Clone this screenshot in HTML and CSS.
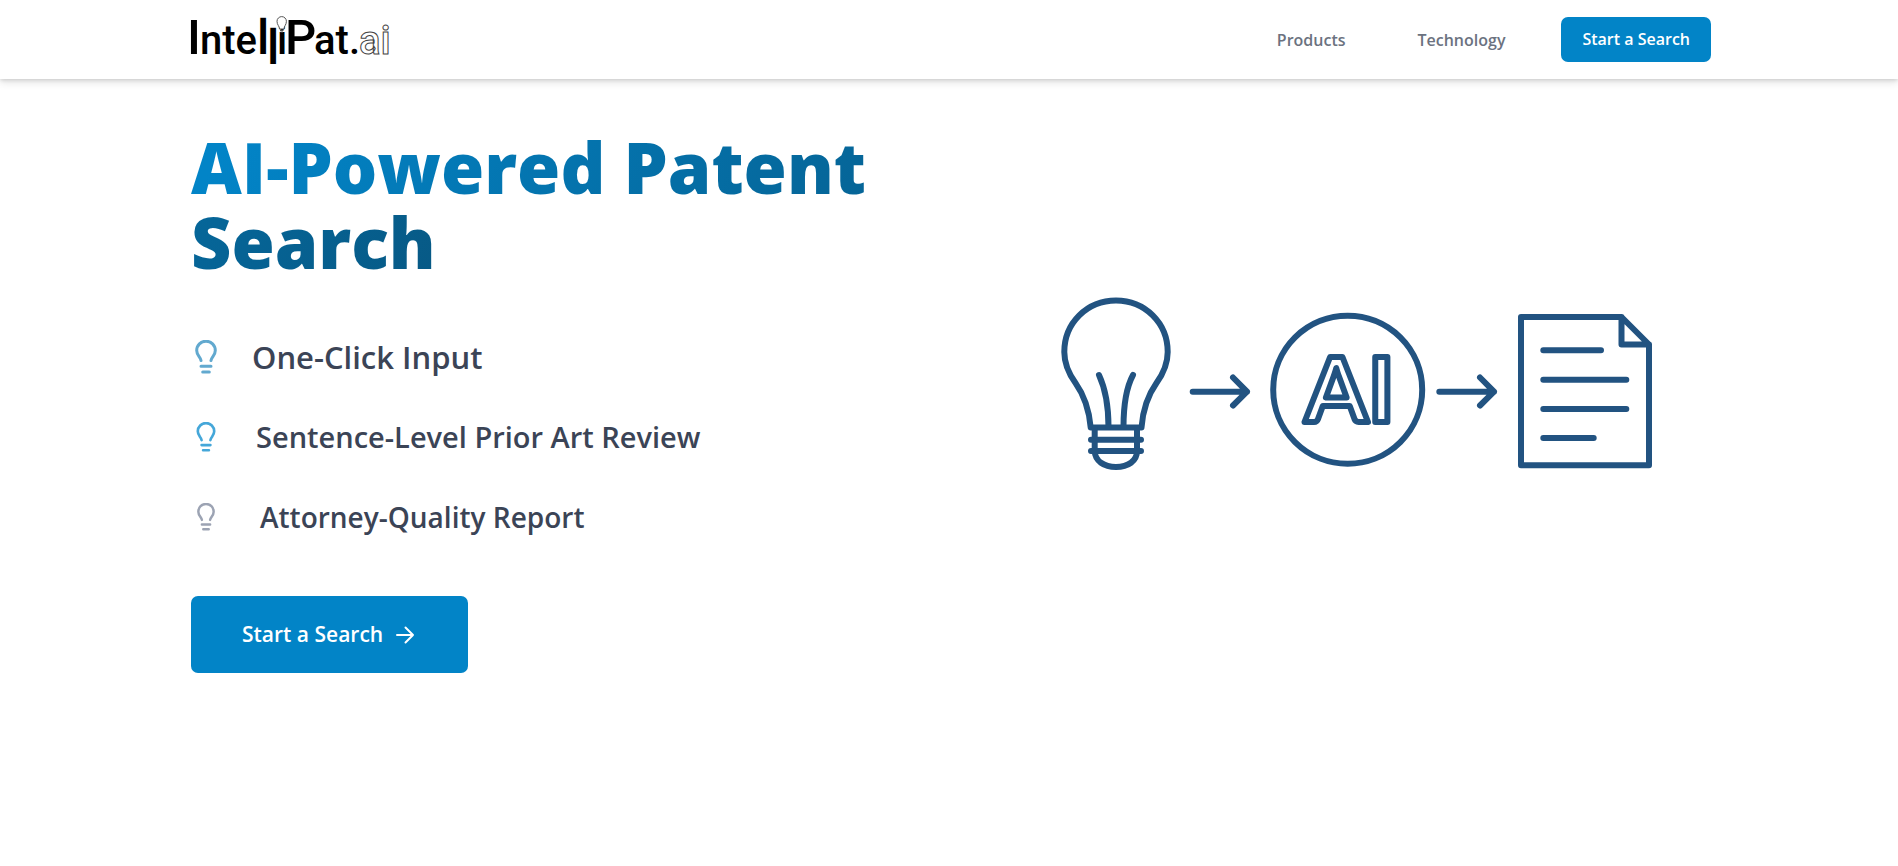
FILE: index.html
```html
<!DOCTYPE html>
<html lang="en">
<head>
<meta charset="utf-8">
<meta name="viewport" content="width=device-width, initial-scale=1">
<title>IntelliPat.ai</title>
<link rel="stylesheet" href="styles.css">
</head>
<body>
<svg class="defs" width="0" height="0" aria-hidden="true">
  <symbol id="bulb" viewBox="0 0 22 34">
    <path d="M6 20.500C5.500 17 1.700 15.500 1.700 10.500A9.300 9.300 0 0 1 20.300 10.500C20.300 15.500 16.500 17 16 20.500M6 26.200H16M7.700 32H14.300"/>
  </symbol>
</svg>
<header class="site-header">
  <div class="container bar">
    <a class="logo" href="#" aria-label="IntelliPat.ai home">
      <svg width="200" height="54" viewBox="0 0 200 54">
        <g class="logo-solid">
          <text class="cap" x="-4" y="41">I</text>
          <text x="9" y="41">nte</text>
          <text class="tall" x="66" y="41">l</text>
          <text class="tall" x="76" y="51">l</text>
          <text x="86" y="41">i</text>
          <text class="cap" x="94" y="41">P</text>
          <text x="123" y="41">at.</text>
        </g>
        <text class="logo-outline" x="168" y="41">ai</text>
        <g class="logo-bulb">
          <path d="M88.500 16C88.500 13 86 12 86 8.300A4.700 4.700 0 0 1 95.400 8.300C95.400 12 93 13 93 16Z"/>
          <path d="M89 17.500H92.500M89.500 19H92"/>
        </g>
      </svg>
    </a>
    <nav class="nav">
      <a class="nav-link" href="#">Products</a>
      <a class="nav-link" href="#">Technology</a>
      <button class="btn btn-small" type="button">Start a Search</button>
    </nav>
  </div>
</header>
<main class="container hero">
  <div class="copy">
    <h1 class="title"><span class="title-ink">AI-Powered Patent Search</span></h1>
    <ul class="features">
      <li class="feature first"><svg class="icon"><use href="#bulb"/></svg><span>One-Click Input</span></li>
      <li class="feature second"><svg class="icon"><use href="#bulb"/></svg><span>Sentence-Level Prior Art Review</span></li>
      <li class="feature third"><svg class="icon"><use href="#bulb"/></svg><span>Attorney-Quality Report</span></li>
    </ul>
    <button class="btn btn-large" type="button">Start a Search
      <svg class="arrow" viewBox="0 0 20 20" width="20" height="20"><path d="M2 10H18M10.500 2.500L18 10L10.500 17.500"/></svg>
    </button>
  </div>
  <svg class="diagram" viewBox="0 0 740 224" role="img" aria-label="Idea to AI to report">
    <path d="M145 10.500C116 10.500 93.300 33 93.300 62C93.300 75 98 84 104.500 93C113 105 118 118 119.700 137.500H170.500C172 118 177 105 185.500 93C192 84 196.700 75 196.700 62C196.700 33 174 10.500 145 10.500Z"/>
    <path d="M128 85C134 98 137.500 115 137.500 137M162 85C155 98 152.500 115 152.500 137M120 149.700H170M120 161H170M123.700 138V161C124 171 133 177 145 177S166 171 166 161V138"/>
    <path d="M221.700 101.700H276M262 87.500L276 101.700L262 115.500"/>
    <ellipse cx="376.700" cy="99.700" rx="74.500" ry="74"/>
    <text class="ai" x="334" y="132">A</text>
    <text class="ai" x="397" y="132">I</text>
    <path d="M468.300 101.700H523M509 87.500L523 101.700L509 115.500"/>
    <path d="M550 27H650.500L678 54.500V175.300H550ZM650.500 27V54.500H678M572.300 60.300H630M572.300 89.700H655.300M572.300 119H655.300M572.300 148H622.700"/>
  </svg>
</main>
</body>
</html>
```
FILE: styles.css
```css
* { box-sizing: border-box; }
body {
  margin: 0;
  background: #fff;
  color: #3b4456;
  font-family: "Open Sans", "Noto Sans", sans-serif;
}
.defs { position: absolute; }
.container {
  width: 100%;
  max-width: 1600px;
  margin: 0 auto;
  padding: 0 38px 0 42px;
}
.site-header {
  background: #fff;
  box-shadow: 0 4px 8px rgba(0, 0, 0, 0.1), 0 1px 4px rgba(0, 0, 0, 0.14);
}
.bar {
  display: flex;
  align-items: center;
  justify-content: space-between;
  height: 79px;
}
.logo svg { display: block; overflow: visible; }
.logo-solid, .logo-outline { font-family: Roboto, sans-serif; font-size: 40px; font-weight: 500; }
.logo-solid { fill: #000; }
.logo-solid .cap { font-size: 49px; }
.logo-solid .tall { font-size: 48px; }
.logo-outline { fill: #fff; stroke: #444; stroke-width: 1; }
.logo-bulb { fill: #fff; stroke: #555; stroke-width: 1; }
.nav { display: flex; align-items: center; }
.nav-link {
  margin-right: 72px;
  color: #6b7280;
  font-size: 16px;
  font-weight: 600;
  line-height: 24px;
  text-decoration: none;
}
.nav-link + .nav-link { margin-right: 56px; }
.btn {
  display: inline-flex;
  align-items: center;
  justify-content: center;
  border: 0;
  border-radius: 7px;
  background: #0284c7;
  color: #fff;
  font-family: inherit;
  font-weight: 600;
}
.btn-small { padding: 10px 21px; font-size: 16px; line-height: 25px; }
.hero {
  display: grid;
  grid-template-columns: 1fr 1fr;
  gap: 40px;
  align-items: center;
  padding-top: 51px;
}
.title {
  margin: 0;
  font-size: 70px;
  font-weight: 800;
  line-height: 75px;
}
.title-ink {
  background: linear-gradient(120deg, #0284c7 5%, #075985);
  background-clip: text;
  -webkit-background-clip: text;
  color: transparent;
}
.features {
  display: flex;
  flex-direction: column;
  gap: 40px;
  margin: 57px 0 59px;
  padding: 0;
  list-style: none;
}
.feature {
  display: flex;
  align-items: center;
  height: 40px;
  font-weight: 600;
  line-height: 40px;
}
.icon {
  width: 30px;
  fill: none;
  stroke-width: 3;
  stroke-linecap: round;
}
.first { gap: 31px; font-size: 31px; }
.second { gap: 35px; font-size: 29px; }
.third { gap: 39px; font-size: 28px; }
.first .icon { height: 34px; stroke: #62a9cf; }
.second .icon { height: 30px; stroke: #45a7d9; }
.third .icon { height: 28px; stroke: #9ca3b3; }
.btn-large { gap: 12px; padding: 22px 53px 22px 51px; font-size: 21px; line-height: 33px; }
.arrow {
  fill: none;
  stroke: #fff;
  stroke-width: 2;
  stroke-linecap: round;
  stroke-linejoin: round;
}
.diagram {
  width: 100%;
  fill: none;
  stroke: #225381;
  stroke-width: 6;
  stroke-linecap: round;
  stroke-linejoin: round;
}
.ai {
  fill: #fff;
  font-family: Lato, sans-serif;
  font-size: 90px;
  font-weight: 700;
}
```
